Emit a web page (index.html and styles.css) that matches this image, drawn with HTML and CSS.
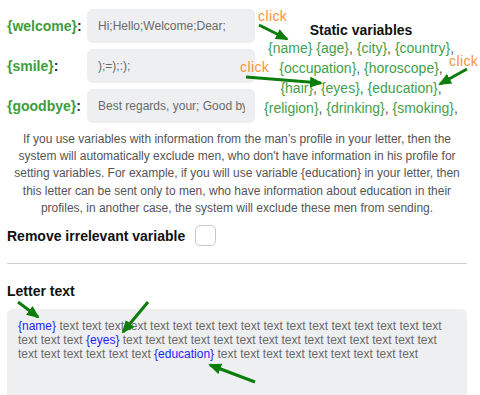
FILE: index.html
```html
<!DOCTYPE html>
<html lang="en">
<head>
  <meta charset="UTF-8">
  <title>Letter variables</title>
  <link rel="stylesheet" href="styles.css">
</head>
<body>

  <div class="page">

    <div class="top">
      <div class="fields">
        <div class="field">
          <label class="field-label"><span class="var">{welcome}</span>:</label>
          <div class="field-input"><span>Hi;Hello;Welcome;Dear;</span></div>
        </div>
        <div class="field">
          <label class="field-label"><span class="var">{smile}</span>:</label>
          <div class="field-input"><span>);=);:);</span></div>
        </div>
        <div class="field">
          <label class="field-label"><span class="var">{goodbye}</span>:</label>
          <div class="field-input"><span>Best regards, your; Good bye;</span></div>
        </div>
      </div>

      <div class="static">
        <div class="static-title">Static variables</div>
        <div class="static-list">
          <span class="var">{name}</span> <span class="var">{age}</span>, <span class="var">{city}</span>, <span class="var">{country}</span>,<br>
          <span class="var">{occupation}</span>, <span class="var">{horoscope}</span>,<br>
          <span class="var">{hair}</span>, <span class="var">{eyes}</span>, <span class="var">{education}</span>,<br>
          <span class="var">{religion}</span>, <span class="var">{drinking}</span>, <span class="var">{smoking}</span>,
        </div>
      </div>
    </div>

    <p class="note">If you use variables with information from the man’s profile in your letter, then the system will automatically exclude men, who don't have information in his profile for setting variables. For example, if you will use variable {education} in your letter, then this letter can be sent only to men, who have information about education in their profiles, in another case, the system will exclude these men from sending.</p>

    <div class="remove">
      <span>Remove irrelevant variable</span>
      <span class="checkbox"></span>
    </div>

    <hr class="divider">

    <div class="letter-title">Letter text</div>
    <div class="letter">
      <span class="lvar">{name}</span> text text text text text text text text text text text text text text text text text text text text <span class="lvar">{eyes}</span> text text text text text text text text text text text text text text text text text text text text <span class="lvar">{education}</span> text text text text text text text text text
    </div>

  </div>

  <!-- annotation arrows -->
  <svg class="marks" width="480" height="395" viewBox="0 0 480 395">
    <defs>
      <marker id="head" markerUnits="userSpaceOnUse" markerWidth="13" markerHeight="11" refX="11" refY="5.5" orient="auto">
        <path d="M0,0 L13,5.5 L0,11 z" fill="#0b7d0b" />
      </marker>
    </defs>
    <g stroke="#0b7d0b" stroke-width="3" marker-end="url(#head)">
      <line x1="259" y1="25" x2="287" y2="39" />
      <line x1="246" y1="77" x2="321" y2="83" />
      <line x1="467" y1="69" x2="440" y2="84" />
      <line x1="18" y1="302" x2="38" y2="317" />
      <line x1="148" y1="302" x2="123" y2="332" />
      <line x1="255" y1="382" x2="210" y2="365" />
    </g>
  </svg>
  <span class="click click-1">click</span>
  <span class="click click-2">click</span>
  <span class="click click-3">click</span>

</body>
</html>
```

FILE: styles.css
```css
body {
  margin: 0;
  background: #fff;
  font-family: "Liberation Sans", Arial, sans-serif;
  color: #222;
  position: relative;
  height: 395px;
  overflow: hidden;
}

.page {
  width: 460px;
  margin-left: 7px;
  padding-top: 9px;
}

.top {
  display: flex;
}

.fields {
  display: flex;
  flex-direction: column;
  gap: 6px;
}

.field {
  display: flex;
  align-items: center;
}

.field-label {
  width: 80px;
  font-size: 14px;
  font-weight: bold;
  color: #1d2a3f;
}

.field-label .var {
  color: #3c9e3c;
}

.field-input {
  width: 147px;
  height: 34px;
  line-height: 34px;
  padding: 0 10px 0 11px;
  background: #eeeff1;
  border-radius: 6px;
  font-size: 12px;
  color: #6a6a6a;
}

.field-input span {
  display: block;
  white-space: nowrap;
  overflow: hidden;
}

.static {
  flex: 1;
  text-align: center;
  padding-top: 13px;
}

.static-title {
  font-size: 14px;
  font-weight: bold;
  line-height: 16px;
  color: #111;
}

.static-list {
  font-size: 14px;
  line-height: 20px;
  color: #555;
  white-space: nowrap;
}

.static-list .var {
  color: #43a04c;
}

.note {
  margin: 8px 0 0;
  font-size: 12px;
  line-height: 17.2px;
  color: #555;
  text-align: center;
}

.remove {
  display: flex;
  align-items: center;
  gap: 10px;
  margin-top: 8px;
  font-size: 14px;
  font-weight: bold;
  color: #111;
}

.checkbox {
  width: 19px;
  height: 19px;
  border: 1px solid #c8c8c8;
  border-radius: 5px;
  background: #fff;
}

.divider {
  margin: 17px 0 0;
  border: none;
  border-top: 1px solid #cfcfcf;
}

.letter-title {
  margin-top: 19px;
  font-size: 14px;
  font-weight: bold;
  line-height: 16px;
  color: #111;
}

.letter {
  margin-top: 10px;
  height: 80px;
  padding: 10px 14px 0 11px;
  background: #eeeff1;
  border-radius: 6px 6px 0 0;
  font-size: 12px;
  line-height: 14px;
  color: #6a6a6a;
}

.lvar {
  color: #1f1fff;
}

.marks {
  position: absolute;
  top: 0;
  left: 0;
  pointer-events: none;
}

.click {
  position: absolute;
  font-size: 14px;
  letter-spacing: 0.4px;
  color: #f7923a;
  line-height: 16px;
}

.click-1 { left: 258px; top: 8px; }
.click-2 { left: 240px; top: 59px; }
.click-3 { left: 449px; top: 53px; }
```
